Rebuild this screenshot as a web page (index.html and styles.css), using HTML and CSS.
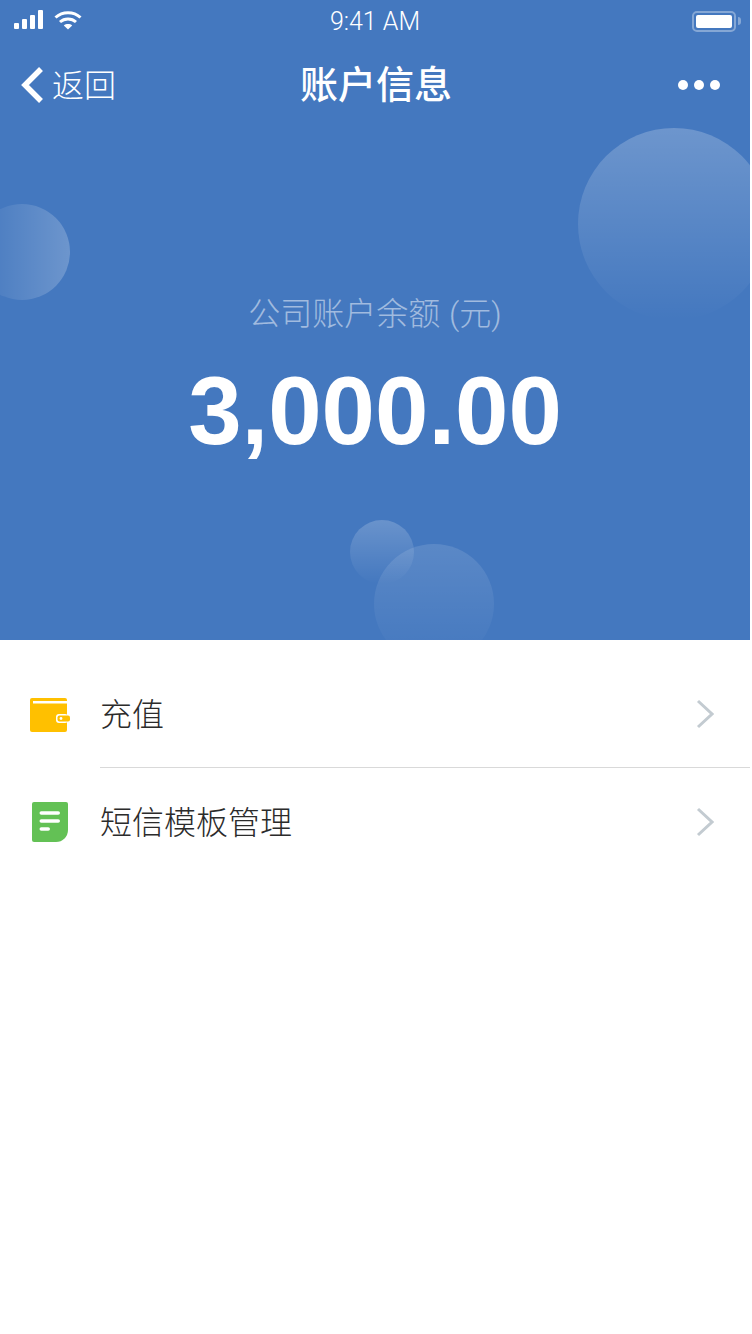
FILE: index.html
```html
<!DOCTYPE html>
<html lang="zh-CN">
<head>
    <meta charset="UTF-8">
    <meta name="viewport" content="width=device-width, initial-scale=1.0">
    <title>账户信息</title>
    <link rel="stylesheet" href="styles.css">
</head>
<body>
    <div class="page">
        <!-- Blue account panel -->
        <section class="hero">
            <div class="bubble bubble-right"></div>
            <div class="bubble bubble-left"></div>
            <div class="bubble bubble-small"></div>
            <div class="bubble bubble-bottom"></div>

            <div class="status-bar">
                <div class="status-side">
                    <svg class="icon-signal" viewBox="0 0 30 20"><rect x="0" y="13" width="5" height="6" rx="1"/><rect x="8" y="9" width="5" height="10" rx="1"/><rect x="16" y="5" width="5" height="14" rx="1"/><rect x="24" y="0" width="5" height="19" rx="1"/></svg>
                    <svg class="icon-wifi" viewBox="0 0 28 20"><path d="M1.500 7.500C8.500 1 19.500 1 26.500 7.500"/><path d="M6 12C10.500 8 17.500 8 22 12"/><path class="wifi-dot" d="M14 19.500 9.800 15.500C12 13.600 16 13.600 18.200 15.500Z"/></svg>
                </div>
                <div class="status-time">9:41 AM</div>
                <div class="status-side status-right">
                    <div class="battery"><div class="battery-level"></div></div>
                    <div class="battery-tip"></div>
                </div>
            </div>

            <div class="nav-bar">
                <a href="#" class="nav-back">
                    <svg class="icon-back" viewBox="0 0 24 38"><path d="M20 3 4 19l16 16"/></svg>
                    <span>返回</span>
                </a>
                <div class="nav-title">账户信息</div>
                <div class="nav-more"><span></span><span></span><span></span></div>
            </div>

            <div class="balance">
                <div class="balance-label">公司账户余额 (元)</div>
                <div class="balance-amount">3,000.00</div>
            </div>
        </section>

        <!-- Menu list -->
        <ul class="menu">
            <li class="menu-item">
                <svg class="menu-icon icon-wallet" viewBox="0 0 40 34">
                    <path fill="#ffc000" d="M2 0h33a2 2 0 0 1 2 2v30a2 2 0 0 1-2 2H2a2 2 0 0 1-2-2V2a2 2 0 0 1 2-2Z"/>
                    <rect x="3" y="3" width="34" height="2.500" fill="#fff"/>
                    <rect x="26" y="16" width="12" height="9" rx="3" fill="#fff"/>
                    <rect x="27.500" y="17.500" width="12.500" height="6" rx="2" fill="#ffc000"/>
                    <circle cx="31" cy="20.500" r="1.400" fill="#fff"/>
                </svg>
                <div class="menu-body">
                    <span class="menu-text">充值</span>
                    <svg class="menu-arrow" viewBox="0 0 18 30"><path d="M2 2l14 13L2 28"/></svg>
                </div>
            </li>
            <li class="menu-item">
                <svg class="menu-icon" viewBox="0 0 40 40">
                    <path fill="#63c155" d="M4 0h32a2 2 0 0 1 2 2v26a12 12 0 0 1-12 12H4a2 2 0 0 1-2-2V2a2 2 0 0 1 2-2Z"/>
                    <rect x="9.500" y="9.200" width="20.500" height="3.600" rx="1.800" fill="#fff"/>
                    <rect x="9.500" y="17.200" width="20.500" height="3.600" rx="1.800" fill="#fff"/>
                    <rect x="9.500" y="25.200" width="10.500" height="3.600" rx="1.800" fill="#fff"/>
                </svg>
                <div class="menu-body">
                    <span class="menu-text">短信模板管理</span>
                    <svg class="menu-arrow" viewBox="0 0 18 30"><path d="M2 2l14 13L2 28"/></svg>
                </div>
            </li>
        </ul>
    </div>
</body>
</html>
```

FILE: styles.css
```css
/* Overall page */
html, body {
    margin: 0;
    padding: 0;
    background: #fff;
}

body {
    font-family: "Liberation Sans", "Noto Sans CJK SC", sans-serif;
}

.page {
    width: 750px;
    height: 1334px;
    overflow: hidden;
}

/* Blue panel */
.hero {
    position: relative;
    height: 640px;
    background: #4478bf;
    color: #fff;
    overflow: hidden;
}

/* Decorative circles */
.bubble {
    position: absolute;
    border-radius: 50%;
    background: linear-gradient(180deg, rgba(255, 255, 255, 0.22), rgba(255, 255, 255, 0));
}

.bubble-right {
    left: 578px;
    top: 128px;
    width: 192px;
    height: 192px;
}

.bubble-left {
    left: -26px;
    top: 204px;
    width: 96px;
    height: 96px;
    background: linear-gradient(90deg, rgba(255, 255, 255, 0), rgba(255, 255, 255, 0.22));
}

.bubble-small {
    left: 350px;
    top: 520px;
    width: 64px;
    height: 64px;
    background: linear-gradient(180deg, rgba(255, 255, 255, 0.2), rgba(255, 255, 255, 0));
}

.bubble-bottom {
    left: 374px;
    top: 544px;
    width: 120px;
    height: 120px;
    background: linear-gradient(180deg, rgba(255, 255, 255, 0.12), rgba(255, 255, 255, 0));
}

/* Status bar */
.status-bar {
    position: relative;
    display: flex;
    align-items: center;
    justify-content: space-between;
    height: 40px;
    padding: 2px 9px 0 14px;
    box-sizing: border-box;
}

.status-side {
    display: flex;
    align-items: center;
    gap: 10px;
    width: 120px;
    margin-top: -2px;
}

.status-right {
    justify-content: flex-end;
    gap: 2px;
    margin-top: 0;
}

.status-time {
    margin-left: -5px;
    font-family: Roboto, "Liberation Sans", sans-serif;
    font-size: 25px;
    font-weight: 300;
}

.icon-signal {
    width: 30px;
    height: 20px;
    fill: #fff;
}

.icon-wifi {
    width: 28px;
    height: 20px;
    fill: none;
    stroke: #fff;
    stroke-width: 3;
}

.wifi-dot {
    fill: #fff;
    stroke: none;
}

.battery {
    width: 36px;
    height: 13px;
    padding: 2px;
    border: 2px solid rgba(255, 255, 255, 0.35);
    border-radius: 5px;
}

.battery-level {
    height: 100%;
    background: #fff;
    border-radius: 2px;
}

.battery-tip {
    width: 3px;
    height: 8px;
    background: rgba(255, 255, 255, 0.35);
    border-radius: 0 3px 3px 0;
}

/* Navigation */
.nav-bar {
    position: relative;
    display: flex;
    align-items: center;
    justify-content: space-between;
    height: 88px;
    padding: 0 30px 0 21px;
    box-sizing: border-box;
}

.nav-back {
    display: flex;
    align-items: center;
    gap: 7px;
    width: 140px;
    font-size: 32px;
    color: #fff;
    text-decoration: none;
}

.nav-back span {
    margin-bottom: 2px;
    font-weight: 300;
}

.icon-back {
    width: 24px;
    height: 38px;
    margin-top: 2px;
    fill: none;
    stroke: #fff;
    stroke-width: 5.500;
}

.nav-title {
    margin-bottom: 5px;
    font-size: 38px;
    font-weight: 500;
}

.nav-more {
    display: flex;
    justify-content: flex-end;
    gap: 6px;
    width: 129px;
    margin-top: 2px;
}

.nav-more span {
    width: 10px;
    height: 10px;
    background: #fff;
    border-radius: 50%;
}

/* Balance */
.balance {
    position: relative;
    padding-top: 162px;
    text-align: center;
}

.balance-label {
    font-family: Roboto, "Noto Sans CJK SC", sans-serif;
    font-size: 32px;
    line-height: 48px;
    font-weight: 300;
    word-spacing: 1px;
    color: rgba(255, 255, 255, 0.5);
}

.balance-amount {
    margin-top: 18px;
    font-size: 96px;
    line-height: 110px;
    font-weight: bold;
}

/* Menu list */
.menu {
    margin: 0;
    padding: 20px 0 0;
    list-style: none;
}

.menu-item {
    display: flex;
    align-items: stretch;
    height: 108px;
    padding-left: 30px;
}

.menu-icon {
    align-self: center;
    width: 40px;
    height: 40px;
    margin-right: 30px;
}

.icon-wallet {
    height: 34px;
    margin-top: 1px;
}

.menu-body {
    flex: 1;
    display: flex;
    align-items: center;
    justify-content: space-between;
    padding-right: 36px;
    border-bottom: 1px solid #d9d9d9;
}

.menu-item:last-child .menu-body {
    border-bottom: none;
}

.menu-text {
    margin-bottom: 4px;
    font-size: 32px;
    font-weight: 300;
    color: #2b2b2b;
}

.menu-arrow {
    width: 18px;
    height: 30px;
    fill: none;
    stroke: #c3cbd1;
    stroke-width: 3;
}
```
